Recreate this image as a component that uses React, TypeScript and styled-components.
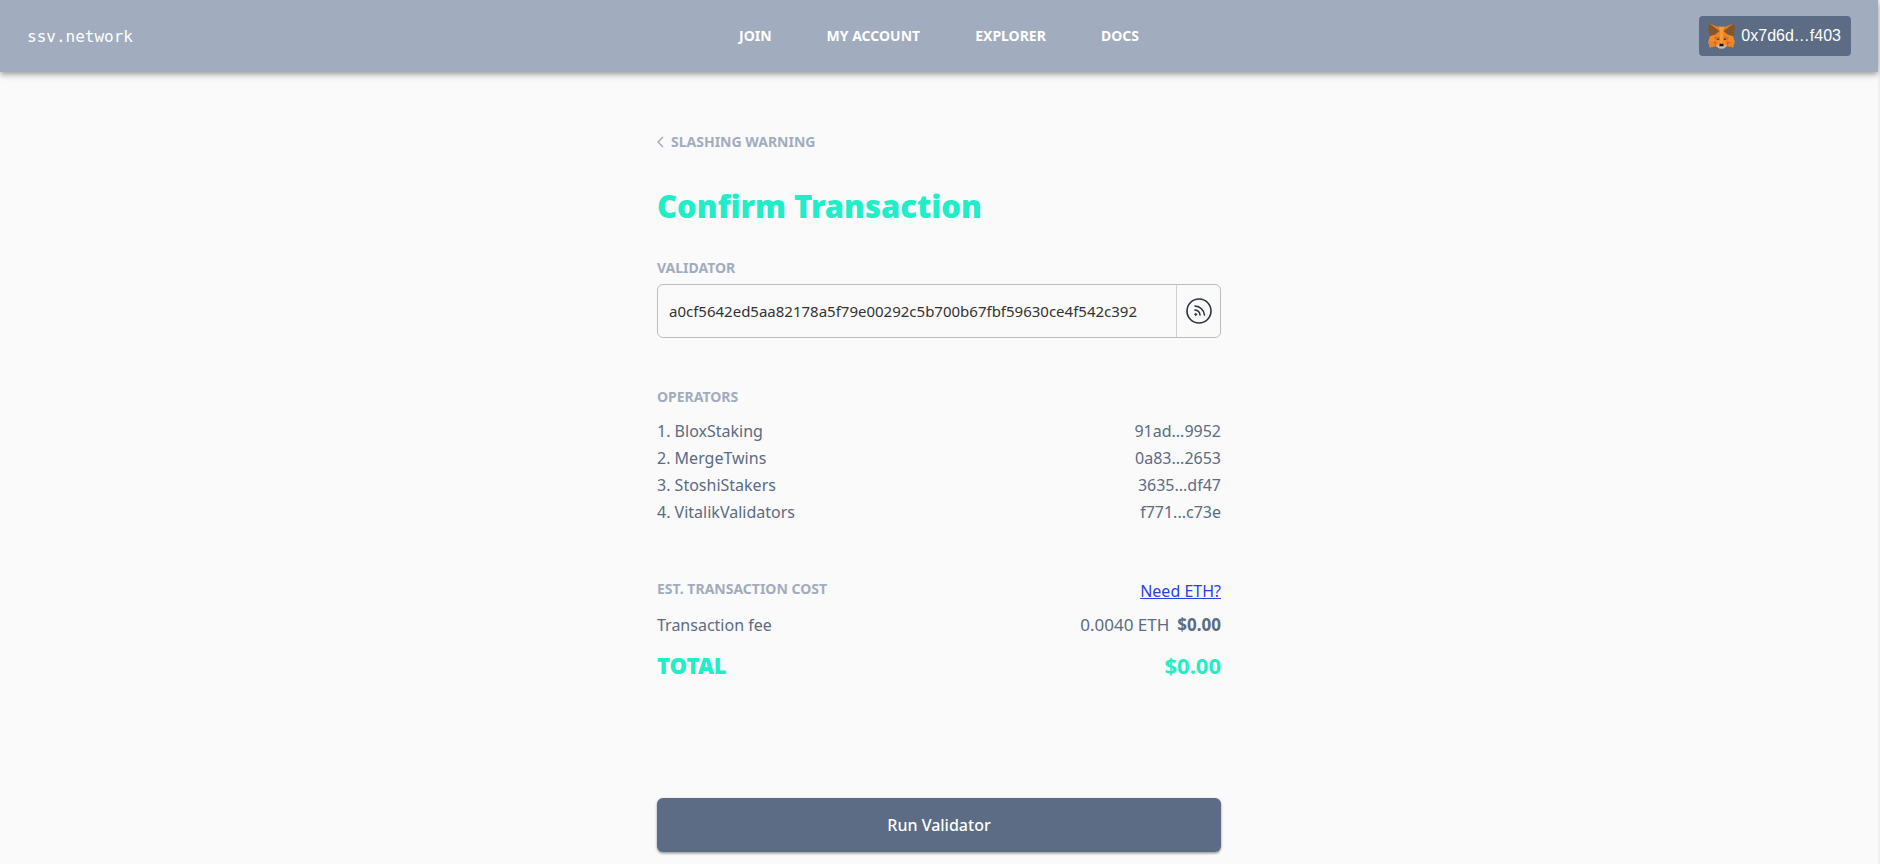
import React from "react";
import styled, { createGlobalStyle } from "styled-components";

const colors = {
  bar: "#a1acbe",
  slate: "#5b6c84",
  muted: "#a1acbe",
  accent: "#20eec8",
  ink: "#2a3340",
  page: "#fafafa",
  link: "#2b3fe0",
};

const GlobalStyle = createGlobalStyle`
  * { box-sizing: border-box; }
  html { min-height: 100%; background: #f0f0f0; }
  body {
    margin: 0;
    font-family: "Noto Sans", sans-serif;
    font-size: 16px;
    color: ${colors.slate};
  }
`;

const Page = styled.div`
  min-height: 100vh;
  margin-right: 2px;
  background: ${colors.page};
`;

const TopBar = styled.header`
  display: grid;
  grid-template-columns: 1fr auto 1fr;
  align-items: center;
  height: 72px;
  padding: 0 27px;
  background: ${colors.bar};
  box-shadow: 0 2px 4px -1px rgba(0, 0, 0, 0.2), 0 4px 5px rgba(0, 0, 0, 0.14),
    0 1px 10px rgba(0, 0, 0, 0.12);
`;

const Brand = styled.a`
  justify-self: start;
  color: #fff;
  font-family: "DejaVu Sans Mono", monospace;
  font-size: 16px;
  text-decoration: none;
`;

const Nav = styled.nav`
  display: flex;
  gap: 55px;
`;

const NavLink = styled.a`
  color: #fff;
  font-size: 14px;
  font-weight: 700;
  line-height: 20px;
  text-decoration: none;
`;

const WalletButton = styled.button`
  display: flex;
  justify-self: end;
  align-items: center;
  gap: 6px;
  height: 40px;
  padding: 0 10px 0 9px;
  border: 0;
  border-radius: 4px;
  background: ${colors.slate};
  color: #fff;
  font-family: "Liberation Sans", sans-serif;
  font-size: 16px;
  cursor: pointer;
`;

const Main = styled.main`
  width: 100%;
  max-width: 564px;
  margin: 0 auto;
  padding: 58px 0 12px;
`;

const BackLink = styled.a`
  display: flex;
  align-items: center;
  gap: 7px;
  width: fit-content;
  color: ${colors.muted};
  font-size: 14px;
  font-weight: 700;
  line-height: 24px;
  text-decoration: none;
`;

const Title = styled.h1`
  margin: 32px 0;
  color: ${colors.accent};
  font-size: 31px;
  font-weight: 900;
  line-height: 40px;
`;

const Label = styled.h2`
  display: block;
  margin: 0;
  color: ${colors.muted};
  font-size: 14px;
  font-weight: 700;
  line-height: 20px;
`;

const Section = styled.section<{ $gap: number }>`
  margin-top: ${(p) => p.$gap}px;
`;

const KeyField = styled.div`
  display: flex;
  height: 54px;
  margin-top: 6px;
  border: 1px solid #bdbdbd;
  border-radius: 6px;
  overflow: hidden;
`;

const KeyInput = styled.input`
  flex: 1;
  min-width: 0;
  margin: 0 38px 0 11px;
  padding: 0;
  border: 0;
  outline: 0;
  background: transparent;
  color: #333;
  font-family: inherit;
  font-size: 15px;
  font-weight: 400;
`;

const KeyButton = styled.button`
  display: grid;
  place-items: center;
  width: 44px;
  padding: 0;
  border: 0;
  border-left: 1px solid #d0d0d0;
  background: transparent;
  cursor: pointer;
`;

const Table = styled.table`
  width: 100%;
  margin-top: 10px;
  border-collapse: collapse;
`;

const Cell = styled.td<{ $right?: boolean }>`
  height: 27px;
  padding: 0;
  line-height: 24px;
  text-align: ${(p) => (p.$right ? "right" : "left")};
`;

const Row = styled.div<{ $gap?: number }>`
  display: flex;
  align-items: flex-start;
  justify-content: space-between;
  margin-top: ${(p) => p.$gap ?? 0}px;
  line-height: 24px;
`;

const EthLink = styled.a`
  color: ${colors.link};
`;

const Fee = styled.span`
  display: flex;
  gap: 8px;
  font-size: 17px;
`;

const Total = styled(Row)`
  color: ${colors.accent};
  font-size: 22px;
  font-weight: 700;
  line-height: 32px;
`;

const TotalName = styled.strong`
  font-weight: 900;
`;

const SubmitButton = styled.button`
  display: block;
  width: 100%;
  height: 54px;
  margin-top: 117px;
  border: 0;
  border-radius: 6px;
  background: ${colors.slate};
  box-shadow: 0 1px 3px rgba(0, 0, 0, 0.3), 0 2px 2px rgba(0, 0, 0, 0.14);
  color: #fff;
  font-family: inherit;
  font-size: 16px;
  font-weight: 500;
  cursor: pointer;
`;

const links = ["JOIN", "MY ACCOUNT", "EXPLORER", "DOCS"];

const operators = [
  ["BloxStaking", "91ad...9952"],
  ["MergeTwins", "0a83...2653"],
  ["StoshiStakers", "3635...df47"],
  ["VitalikValidators", "f771...c73e"],
];

function FoxIcon() {
  return (
    <svg width="27" height="26" viewBox="32 34 255 240" aria-hidden="true">
      <path d="M125.600 65.800h67.500l-15.200 41.100 37 31.300 52.300 15.300 17.600 54.200-16.300 55.300-56.700-15.600-11 9-22.400 15.500h-38.300l-22.300-15.500-11-9-56.700 15.600-16.200-55.300 17.400-54.200 52.300-15.300 37-31.300z" fill="#f08a2c" />
      <path d="M125.600 65.800h67.500l-15.200 41.100-3.300 57.700-1.500 63h-27.700l-1.300-63-3.500-57.700z" fill="#f79a34" />
      <path d="m103.600 138.200-15.800 23.900 56.300 2.500-2-60.500zM214.900 138.200l-39-34.800-1.300 61.200 56.200-2.500z" fill="#ea8429" />
      <path d="m87.800 162.100 23.600 46-.8-22.900 20-9.100 8.200 17.400 5.300-28.900zM230.800 162.100l-23.700 46 1-22.900-20-9.100-8.300 17.400-5.200-28.900z" fill="#d96f20" />
      <path d="m33.900 207.700 16.200 55.300 56.700-15.600-26.500-40.600zM284.800 207.700 268.500 263l-56.700-15.600 26.500-40.600z" fill="#e9842e" />
      <path d="m80.300 207.700 31.300-.9-4.800 40.600zM238.300 207.700l-31.300-.9 4.800 40.600z" fill="#d0671c" />
      <path d="m44.400 35.500 81.200 30.300 15 41.100-37 31.300-52.300 15.300-11.600-14 5-10-8-9 3.600-6.300-8.500-40.800zM274.100 35.500 193 65.800l-15.100 41.100 37 31.300 52.300 15.300 11.600-14-5-10 8-9-3.500-6.300 8.500-40.800z" fill="#85562b" />
      <path d="m44.400 35.500 98.700 74.600-17.500-44.300zM274.100 35.500l-99.500 73.900 18.400-43.600z" fill="#d9822f" />
      <path d="m138.800 193.500-28.200-8.300 19.900-9.100zM179.700 193.500l8.300-17.400 20 9.100z" fill="#233447" />
      <path d="m106.800 247.400 33.800-16.500h37.300l33.900 16.500-11 9-22.400 15.500h-38.300l-22.300-15.500z" fill="#d0bdaf" />
      <path d="m177.900 230.900-4.800-3.300h-27.700l-4.800 3.300-2.500 22.100 2.300-2.200h37.700l2.500 2.200z" fill="#161616" />
    </svg>
  );
}

function BeaconIcon() {
  return (
    <svg width="26" height="26" viewBox="0 0 26 26" fill="none" stroke={colors.ink} strokeWidth="1.600" strokeLinecap="round" aria-hidden="true">
      <circle cx="13" cy="13" r="12" />
      <path d="M9 8a10 10 0 0 1 9.500 9M9 12a5.500 5.500 0 0 1 5 5" />
      <circle cx="9.700" cy="16.400" r="1" fill={colors.ink} strokeWidth="0.800" />
    </svg>
  );
}

export default function App() {
  return (
    <>
      <GlobalStyle />
      <Page>
        <TopBar>
          <Brand href="#">ssv.network</Brand>
          <Nav>
            {links.map((name) => (
              <NavLink key={name} href="#">{name}</NavLink>
            ))}
          </Nav>
          <WalletButton type="button">
            <FoxIcon />
            0x7d6d…f403
          </WalletButton>
        </TopBar>
        <Main>
          <BackLink href="#">
            <svg width="7" height="12" viewBox="0 0 7 12" fill="none" stroke={colors.muted} strokeWidth="1.500" aria-hidden="true">
              <path d="M6 1 1 6l5 5" />
            </svg>
            SLASHING WARNING
          </BackLink>
          <Title>Confirm Transaction</Title>
          <Label as="label" htmlFor="validator">VALIDATOR</Label>
          <KeyField>
            <KeyInput id="validator" readOnly value="a0cf5642ed5aa82178a5f79e00292c5b700b67fbf59630ce4f542c392" />
            <KeyButton type="button" aria-label="Open in beacon chain explorer">
              <BeaconIcon />
            </KeyButton>
          </KeyField>
          <Section $gap={49}>
            <Label>OPERATORS</Label>
            <Table>
              <tbody>
                {operators.map(([name, address], index) => (
                  <tr key={name}>
                    <Cell>{index + 1}. {name}</Cell>
                    <Cell $right>{address}</Cell>
                  </tr>
                ))}
              </tbody>
            </Table>
          </Section>
          <Section $gap={54}>
            <Row>
              <Label>EST. TRANSACTION COST</Label>
              <EthLink href="#">Need ETH?</EthLink>
            </Row>
            <Row $gap={10}>
              <span>Transaction fee</span>
              <Fee>
                <span>0.0040 ETH</span>
                <strong>$0.00</strong>
              </Fee>
            </Row>
            <Total $gap={12}>
              <TotalName>TOTAL</TotalName>
              <span>$0.00</span>
            </Total>
          </Section>
          <SubmitButton type="button">Run Validator</SubmitButton>
        </Main>
      </Page>
    </>
  );
}
